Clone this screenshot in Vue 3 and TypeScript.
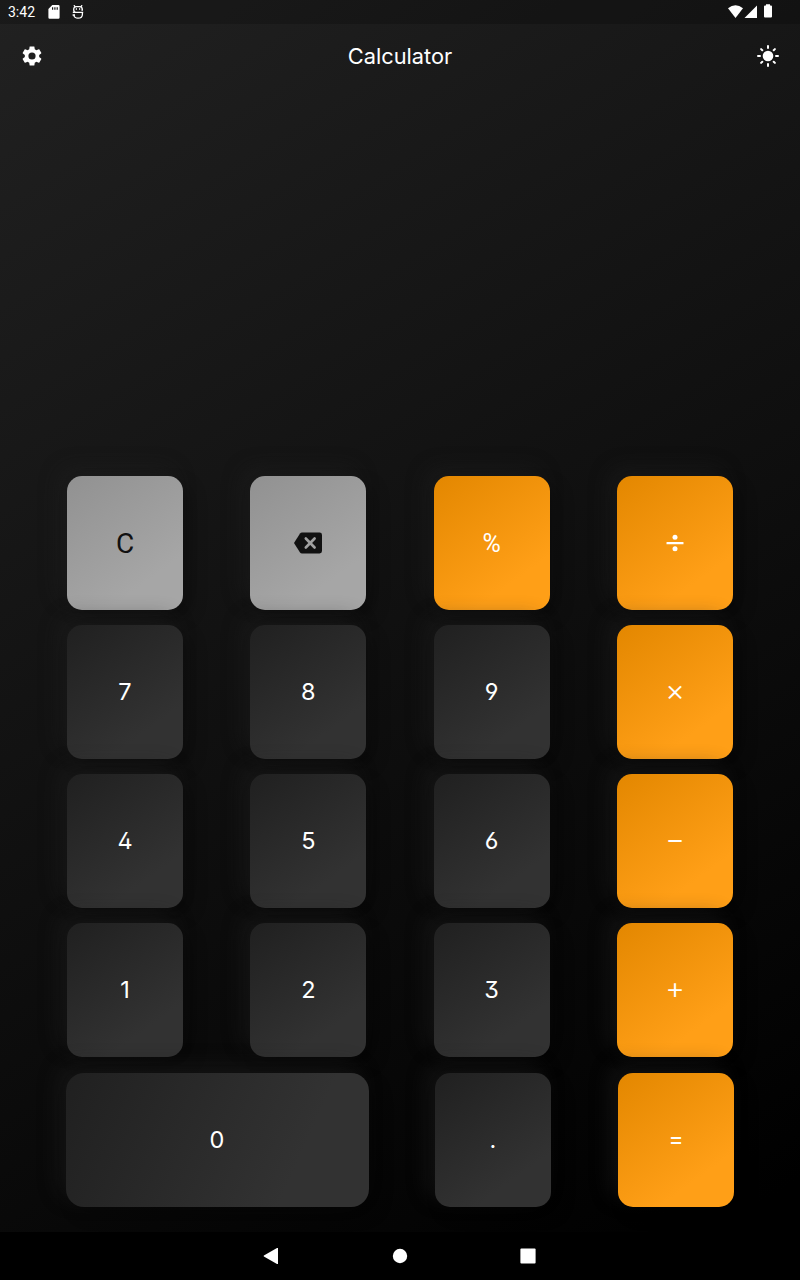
<script setup lang="ts">
interface Key {
  id: string
  label: string
  tone: 'dark' | 'gray' | 'orange'
  icon?: 'backspace' | 'divide'
  kind?: string
}

const digit = (label: string): Key => ({ id: label, label, tone: 'dark' })

const rows: Key[][] = [
  [
    { id: 'clear', label: 'C', tone: 'gray', kind: 'clear' },
    { id: 'backspace', label: '', tone: 'gray', icon: 'backspace' },
    { id: 'percent', label: '%', tone: 'orange', kind: 'percent' },
    { id: 'divide', label: '', tone: 'orange', icon: 'divide' },
  ],
  [digit('7'), digit('8'), digit('9'), { id: 'times', label: '×', tone: 'orange', kind: 'op' }],
  [digit('4'), digit('5'), digit('6'), { id: 'minus', label: '−', tone: 'orange', kind: 'op' }],
  [digit('1'), digit('2'), digit('3'), { id: 'plus', label: '+', tone: 'orange', kind: 'op' }],
]

const lastRow: Key[] = [
  { id: 'zero', label: '0', tone: 'dark', kind: 'zero' },
  { id: 'dot', label: '.', tone: 'dark', kind: 'dot' },
  { id: 'equals', label: '=', tone: 'orange', kind: 'equals' },
]
</script>

<template>
  <div class="screen">
    <div class="status">
      <span class="clock">3:42</span>
      <svg class="sd" width="12" height="14" viewBox="0 0 12 14">
        <path fill="#fff" fill-rule="evenodd" d="M4.3 0H10.4Q11.6 0 11.6 1.2V12.6Q11.6 13.8 10.4 13.8H1.6Q.4 13.8 .4 12.6V4ZM4 2.2V4.8H5.2V2.2ZM6.3 2.2V4.8H7.5V2.2ZM8.6 2.2V4.8H9.8V2.2Z" />
      </svg>
      <svg class="bug" width="12" height="14" viewBox="0 0 12 14" fill="none" stroke="#fff" stroke-width="1.3">
        <path d="M1.9 .2L3.2 1.8M10.1 .2L8.8 1.8M10.3 5.4V4.4Q10.3 1.7 7.4 1.7H4.6Q1.7 1.7 1.7 4.4Q1.7 7.4 4 7.4H10.4V9.2Q10.4 13.2 6 13.2Q2.4 13.2 1.8 10M.8 7.4H3M9 7.4H11.2M9.4 5.2H11M.6 10H3" />
        <path d="M3.8 4H5M7 4H8.2" />
      </svg>
      <span class="grow"></span>
      <svg class="system" width="46" height="16" viewBox="0 0 46 16" fill="#fff">
        <path d="M0 4.2Q7.5 -1.6 15 4.2L7.5 14Z" />
        <path d="M16.5 14L29 1.5V14Z" />
        <path d="M38 .2H42V1.5H43Q44 1.5 44 2.5V12.5Q44 13.5 43 13.5H37Q36 13.5 36 12.5V2.5Q36 1.5 37 1.5H38Z" />
      </svg>
    </div>

    <header class="bar">
      <svg width="24" height="24" viewBox="0 0 24 24" fill="#fff">
        <path d="M19.14 12.94c.04-.3.06-.61.06-.94s-.02-.64-.07-.94l2.03-1.58c.18-.14.23-.41.12-.61l-1.92-3.32c-.12-.22-.37-.29-.59-.22l-2.39.96c-.5-.38-1.03-.7-1.62-.94l-.36-2.54c-.04-.24-.24-.41-.48-.41h-3.84c-.24 0-.43.17-.47.41l-.36 2.54c-.59.24-1.13.57-1.62.94l-2.39-.96c-.22-.08-.47 0-.59.22L2.74 8.87c-.12.21-.08.47.12.61l2.03 1.58c-.05.3-.09.63-.09.94s.02.64.07.94l-2.03 1.58c-.18.14-.23.41-.12.61l1.92 3.32c.12.22.37.29.59.22l2.39-.96c.5.38 1.03.7 1.62.94l.36 2.54c.05.24.24.41.48.41h3.84c.24 0 .44-.17.47-.41l.36-2.54c.59-.24 1.13-.56 1.62-.94l2.39.96c.22.08.47 0 .59-.22l1.92-3.32c.12-.22.07-.47-.12-.61zM12 15.6a3.6 3.6 0 1 1 0-7.2 3.6 3.6 0 0 1 0 7.2z" />
      </svg>
      <h1 class="title">Calculator</h1>
      <svg width="24" height="24" viewBox="0 0 24 24" fill="none" stroke="#fff" stroke-width="2" stroke-linecap="round">
        <circle cx="12" cy="12" r="5.3" fill="#fff" stroke="none" />
        <path d="M12 2V4M12 20V22M2 12H4M20 12H22M5.1 5.1L6.3 6.3M17.7 17.7L18.9 18.9M18.9 5.1L17.7 6.3M6.3 17.7L5.1 18.9" />
      </svg>
    </header>

    <main class="pad">
      <div v-for="(row, i) in rows" :key="i" class="row">
        <button v-for="k in row" :key="k.id" class="key" :class="[k.tone, k.kind]">
          <svg v-if="k.icon === 'backspace'" width="28" height="22" viewBox="0 0 28 22">
            <path fill="#111" d="M8 .5H25.6Q28 .5 28 2.9V19.1Q28 21.5 25.6 21.5H8Q6.8 21.5 6 20.4L0 11L6 1.6Q6.8 .5 8 .5Z" />
            <path stroke="#a0a0a0" stroke-width="2.6" stroke-linecap="round" d="M11.8 6.5L20.6 15.5M20.6 6.5L11.8 15.5" />
          </svg>
          <svg v-else-if="k.icon === 'divide'" width="18" height="18" viewBox="0 0 18 18" fill="#fff">
            <rect x=".5" y="7.9" width="17" height="2.4" rx=".3" />
            <circle cx="9" cy="3.2" r="2.5" />
            <circle cx="9" cy="14.8" r="2.5" />
          </svg>
          <span v-else>{{ k.label }}</span>
        </button>
      </div>
      <div class="row last">
        <button v-for="k in lastRow" :key="k.id" class="key" :class="[k.tone, k.kind]">
          <span>{{ k.label }}</span>
        </button>
      </div>
    </main>

    <nav class="nav">
      <svg width="16" height="18" viewBox="0 0 16 18"><path fill="#fff" d="M14 1V17Q13.5 17.2 13 17L-.1 9.6Q-.6 9 -.1 8.4L13 1Q13.5 .8 14 1Z" /></svg>
      <svg width="16" height="16" viewBox="0 0 16 16"><circle cx="8" cy="8" r="7.2" fill="#fff" /></svg>
      <svg width="16" height="16" viewBox="0 0 16 16"><rect x=".4" y=".4" width="15.2" height="15.2" rx="1" fill="#fff" /></svg>
    </nav>
  </div>
</template>

<style>
body {
  margin: 0;
  background: #000;
}
</style>

<style scoped>
.screen {
  width: 800px;
  height: 1280px;
  display: flex;
  flex-direction: column;
  overflow: hidden;
  color: #fff;
  font-family: Roboto, "Liberation Sans", sans-serif;
  background: linear-gradient(148deg, #212121 0%, #000 97%) 0 0 / 800px 1232px no-repeat #000;
}
.status {
  height: 24px;
  flex: none;
  display: flex;
  align-items: center;
  box-sizing: border-box;
  padding: 0 26px 0 8px;
  background: rgba(0, 0, 0, 0.2);
}
.clock {
  font-size: 14px;
  line-height: 24px;
  width: 40px;
}
.bug {
  margin-left: 12px;
}
.grow {
  flex: 1;
}
.system {
  margin-bottom: 1px;
}
.bar {
  height: 64px;
  flex: none;
  display: flex;
  align-items: center;
  justify-content: space-between;
  padding: 0 20px;
}
.title {
  margin: 0;
  font: 400 21.8px/28px Inter, Roboto, sans-serif;
}
.pad {
  flex: 1;
  padding-top: 388px;
  display: flex;
  flex-direction: column;
  gap: 15px;
}
.row {
  display: flex;
  justify-content: space-between;
  padding: 0 67px;
}
.row.last {
  margin-top: 1px;
  padding: 0 66px;
}
.key {
  width: 116px;
  height: 134px;
  padding: 0;
  border: 0;
  border-radius: 15px;
  display: flex;
  align-items: center;
  justify-content: center;
  font: 420 23.5px/30px Inter, Roboto, sans-serif;
  font-feature-settings: "ss01", "cv09";
  color: #fff;
  box-shadow: 8px 8px 16px rgba(0, 0, 0, 0.25), -8px -8px 20px rgba(33, 33, 33, 0.45);
}
.dark {
  background: linear-gradient(144deg, #202020, #323232 75%);
}
.gray {
  background: linear-gradient(144deg, #919191, #a6a6a6 75%);
}
.orange {
  background: linear-gradient(144deg, #e38700, #ff9f17 75%);
}
.clear {
  font: 400 28px/30px Roboto, sans-serif;
  color: #111;
}
.clear span {
  padding-top: 2px;
}
.percent {
  font: 400 25px/30px Roboto, sans-serif;
}
.percent span {
  padding-top: 1px;
}
.op {
  font-weight: 300;
  font-size: 30px;
}
.op span {
  padding-bottom: 5px;
}
.zero {
  width: 303px;
  border-radius: 18px;
  background: linear-gradient(114deg, #202020, #323232 75%);
}
.zero span {
  padding-right: 1px;
}
.dot {
  margin-right: 1px;
}
.equals {
  font: 400 24.5px/30px Roboto, sans-serif;
}
.equals span {
  padding-top: 2px;
}
.nav {
  height: 48px;
  flex: none;
  display: flex;
  align-items: center;
  justify-content: center;
  gap: 112px;
  background: #000;
}
.nav svg {
  overflow: visible;
}
</style>
